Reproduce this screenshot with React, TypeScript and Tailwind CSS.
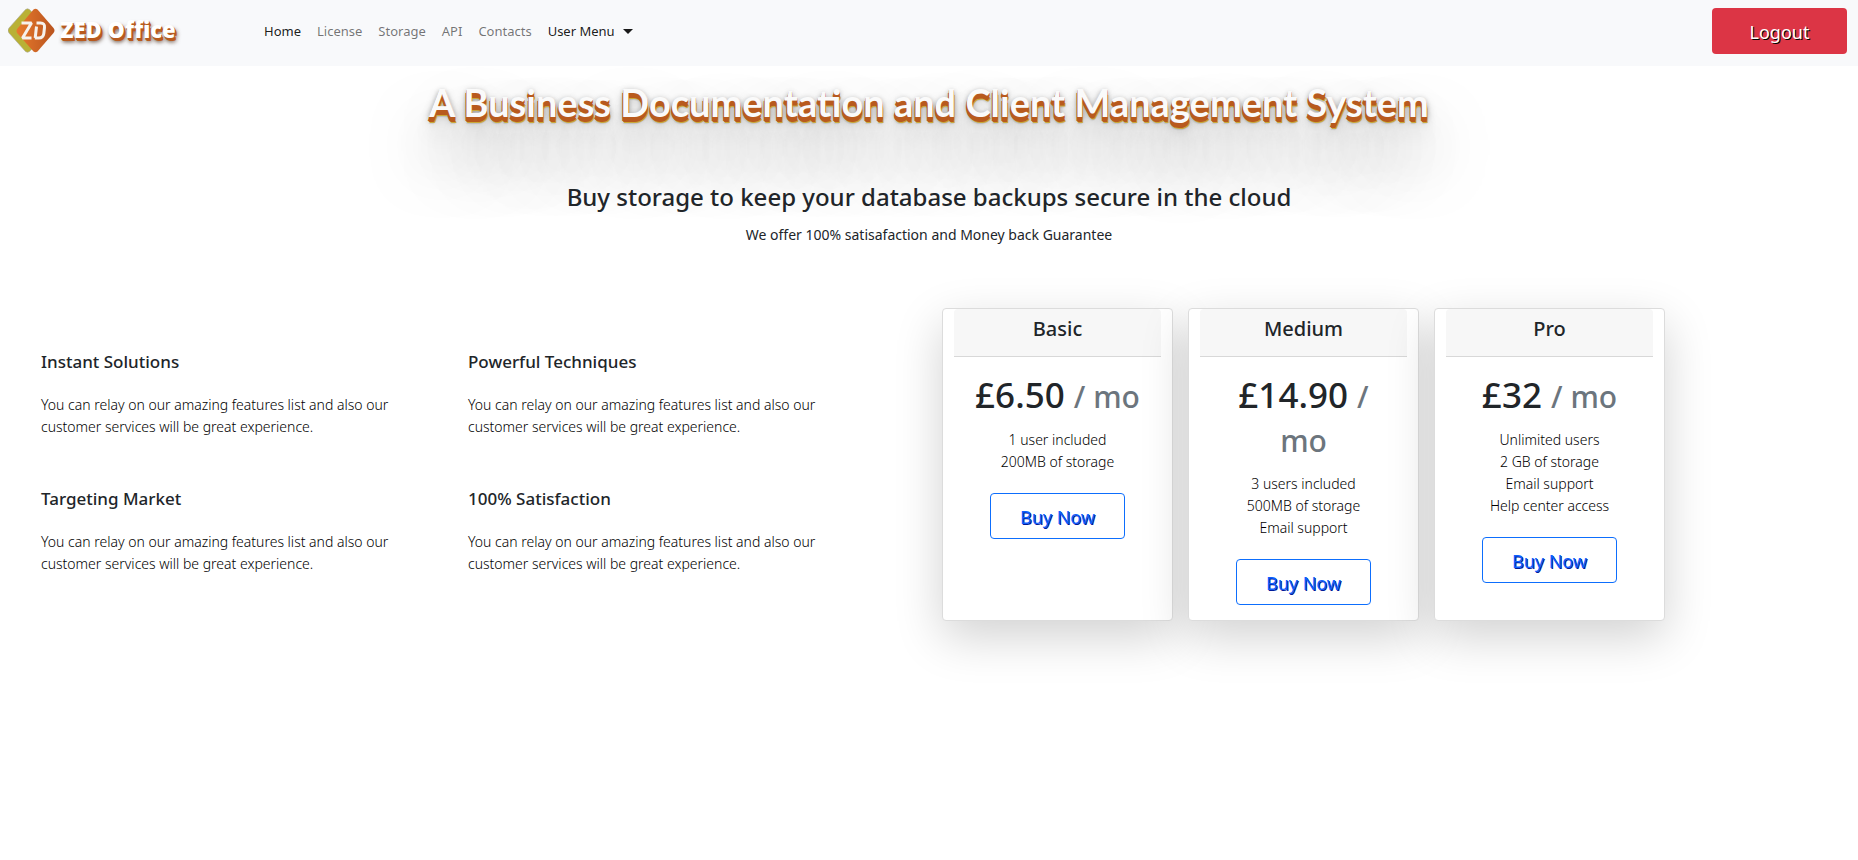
import React from "react";

const navLinks = ["Home", "License", "Storage", "API", "Contacts"];

const features = [
  "Instant Solutions",
  "Powerful Techniques",
  "Targeting Market",
  "100% Satisfaction",
];

const plans = [
  { name: "Basic", price: "£6.50", items: ["1 user included", "200MB of storage"] },
  { name: "Medium", price: "£14.90", items: ["3 users included", "500MB of storage", "Email support"] },
  {
    name: "Pro",
    price: "£32",
    items: ["Unlimited users", "2 GB of storage", "Email support", "Help center access"],
  },
];

function Logo() {
  return (
    <svg viewBox="0 0 48 48" className="size-12 shrink-0" aria-hidden="true">
      <defs>
        <linearGradient id="zd-orange" x1="0" x2="1">
          <stop offset="0" stopColor="#e87a2c" />
          <stop offset="1" stopColor="#b9541f" />
        </linearGradient>
      </defs>
      <path d="M17.5 2.6q2-1.6 4 0L39 21.500q2 2.500 0 5L21.500 44.500q-2 1.600-4 0L1 26q-2-2.500 0-5z" fill="#b9b135" stroke="#a9a9a0" strokeWidth="0.600" />
      <path d="M25.500 2.600q2-1.600 4 0L45.500 21q2 2.500 0 5L29.500 44.500q-2 1.600-4 0L9.500 26.500q-2-2.500 0-5z" fill="url(#zd-orange)" />
      <path d="M13.500 16h10L14.500 31h9" fill="none" stroke="#f6f1ec" strokeWidth="3" strokeLinejoin="bevel" />
      <path d="M28.500 16h4q4.500 0 4 4.500l-.7 6q-.6 4.500-5 4.500h-4M28.500 19.500l-1.300 11.500" fill="none" stroke="#f6f1ec" strokeWidth="3" />
    </svg>
  );
}

export default function App() {
  return (
    <div className="min-h-screen bg-white font-['Noto_Sans','Open_Sans',sans-serif] text-sm text-[#212529]">
      <nav className="flex items-start bg-[#f8f9fb] pt-2 pr-[11px] pb-3 pl-2">
        <a href="#" className="flex h-[46px] w-60 items-center gap-1">
          <Logo />
          <span className="pb-1 font-['Open_Sans',sans-serif] text-[22px] leading-8 font-extrabold text-white [text-shadow:1px_1px_0_#b85a1e,1px_2px_0_#b85a1e,2px_3px_0_#b85a1e,2px_4px_4px_rgba(60,30,10,0.8)]">
            ZED Office
          </span>
        </a>
        <div className="flex h-[46px] flex-1 items-center gap-4 pl-4 text-[13px]">
          {navLinks.map((label, i) => (
            <a key={label} href="#" className={i === 0 ? "text-black/90" : "text-black/55"}>
              {label}
            </a>
          ))}
          <button type="button" className="flex items-center gap-2 text-black/90">
            User Menu
            <span className="border-x-5 border-t-5 border-x-transparent border-t-black/90" />
          </button>
        </div>
        <button
          type="button"
          className="h-[46px] w-[135px] rounded bg-[#dc3545] pt-px text-lg text-white [text-shadow:1px_1px_0_#000]"
        >
          Logout
        </button>
      </nav>

      <header className="flex flex-col items-center text-center">
        <h1 className="pt-2.5 font-['Lato',sans-serif] text-[38px] leading-[52px] font-bold text-[#fafafa] [text-shadow:0_1px_0_#b85a1e,0_2px_0_#b85a1e,0_3px_0_#b85a1e,-1px_4px_0_#b85a1e,0_5px_0_#b85a1e,1px_6px_0_#c9a93a,0_7px_1px_rgba(0,0,0,0.1),0_0_5px_rgba(0,0,0,0.1),0_3px_5px_rgba(0,0,0,0.2),0_5px_10px_rgba(0,0,0,0.25),0_20px_20px_rgba(0,0,0,0.1),0_40px_60px_rgba(0,0,0,0.5)]">
          A Business Documentation and Client Management System
        </h1>
        <h2 className="pt-[51px] text-2xl leading-9 font-medium">
          Buy storage to keep your database backups secure in the cloud
        </h2>
        <p className="pt-2 leading-6">We offer 100% satisafaction and Money back Guarantee</p>
      </header>

      <main className="flex items-start pt-[61px]">
        <section className="grid w-1/2 grid-cols-2 gap-y-[49px] pt-[42px] pr-[34px] pl-[41px]">
          {features.map((title) => (
            <article key={title} className="pr-10">
              <h3 className="text-[17px] leading-6 font-medium">{title}</h3>
              <p className="pt-5 leading-[22px] font-light text-black">
                You can relay on our amazing features list and also our customer services will be great experience.
              </p>
            </article>
          ))}
        </section>

        <section className="flex gap-[15px] pl-[13px] text-center">
          {plans.map((plan) => (
            <article
              key={plan.name}
              className="w-[231px] rounded border border-[#dcdcdc] bg-white px-[11px] pb-[15px] shadow-[0_16px_48px_rgba(0,0,0,0.18)]"
            >
              <h2 className="h-12 rounded-t border-b border-[#d8d8d8] bg-[#f7f7f7] pt-1 text-xl leading-8 font-medium">
                {plan.name}
              </h2>
              <div className="px-4 pt-4">
                <p className="text-[35px] leading-[44px] font-medium">
                  {plan.price} <small className="text-[30px] leading-none font-medium text-[#6c757d]">/ mo</small>
                </p>
                <ul className="pt-3 pb-5 leading-[22px] font-light text-black">
                  {plan.items.map((item) => (
                    <li key={item}>{item}</li>
                  ))}
                </ul>
                <button
                  type="button"
                  className="mx-auto block h-[46px] w-[135px] rounded border border-[#0d6efd] pt-px text-lg text-[#0d5efd] [text-shadow:1px_1px_0_#001a99]"
                >
                  Buy Now
                </button>
              </div>
            </article>
          ))}
        </section>
      </main>
    </div>
  );
}
